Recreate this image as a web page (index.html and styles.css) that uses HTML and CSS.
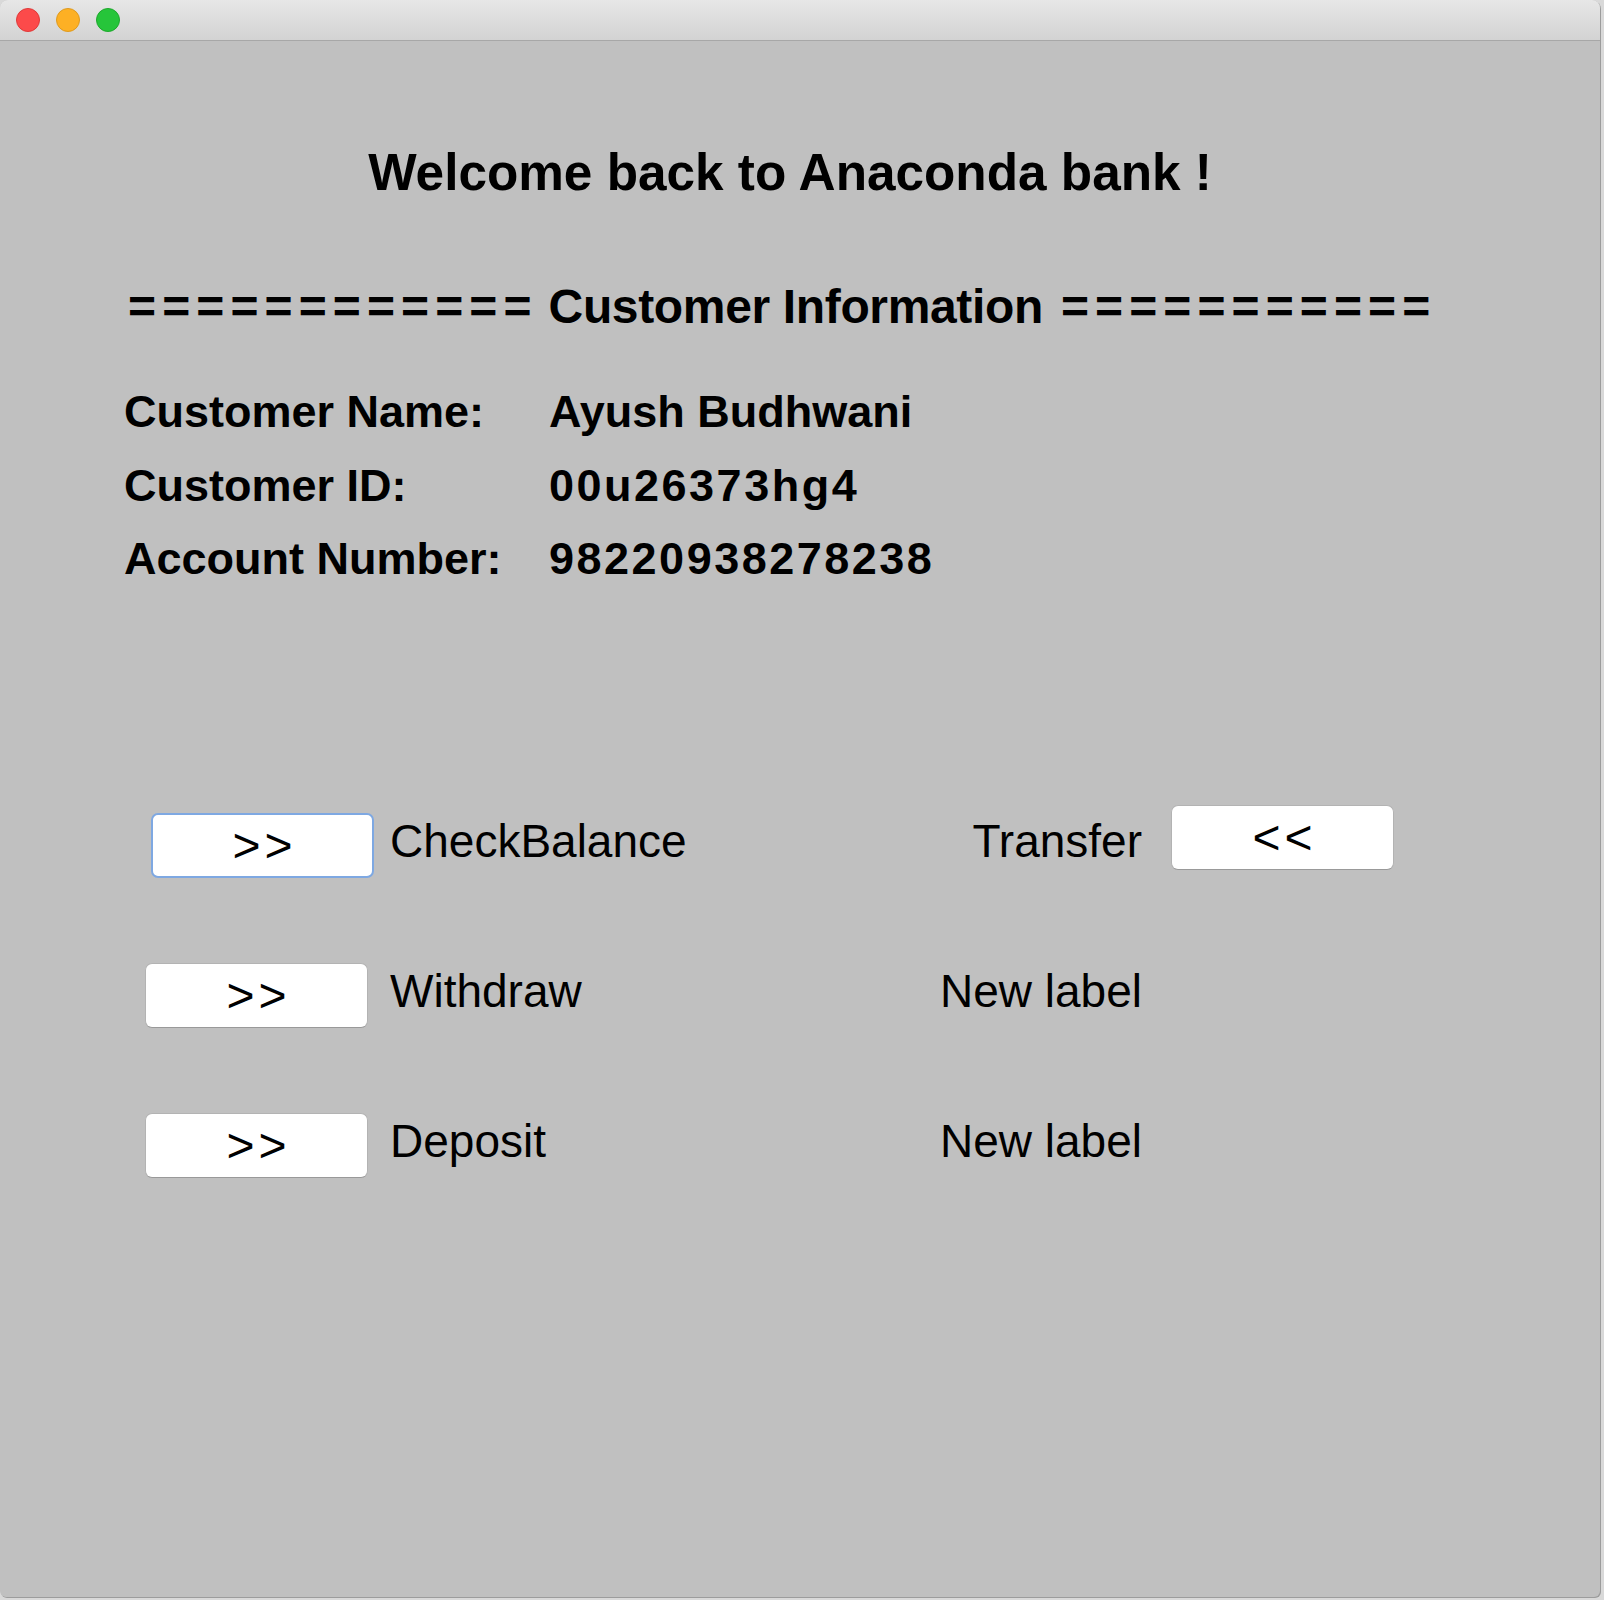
FILE: index.html
```
<!DOCTYPE html>
<html lang="en">
<head>
<meta charset="utf-8">
<title>Anaconda bank</title>
<link rel="stylesheet" href="styles.css">
</head>
<body>
<div class="window">
  <div class="titlebar">
    <span class="light red"></span>
    <span class="light yellow"></span>
    <span class="light green"></span>
  </div>
  <div class="content">
    <h1 class="title">Welcome back to Anaconda bank !</h1>
    <div class="section-head">
      <span class="rule">============</span>
      <span class="head-text">Customer Information</span>
      <span class="rule">===========</span>
    </div>
    <div class="info">
      <span class="info-label">Customer Name:</span>
      <span class="info-value">Ayush Budhwani</span>
      <span class="info-label">Customer ID:</span>
      <span class="info-value num">00u26373hg4</span>
      <span class="info-label">Account Number:</span>
      <span class="info-value num">98220938278238</span>
    </div>
    <div class="actions">
      <button class="btn btn-left focus">&gt;&gt;</button>
      <span class="label">CheckBalance</span>
      <span class="label label-right">Transfer</span>
      <button class="btn btn-right">&lt;&lt;</button>

      <button class="btn btn-left">&gt;&gt;</button>
      <span class="label">Withdraw</span>
      <span class="label label-right">New label</span>

      <button class="btn btn-left">&gt;&gt;</button>
      <span class="label">Deposit</span>
      <span class="label label-right">New label</span>
    </div>
  </div>
</div>
</body>
</html>
```
FILE: styles.css
```
html, body {
  margin: 0;
  padding: 0;
}

body {
  width: 1604px;
  height: 1600px;
  background: #d9d9d9;
  font-family: "Liberation Sans", Arial, sans-serif;
  color: #000;
  overflow: hidden;
}

.window {
  width: 1600px;
  height: 1597px;
  background: #c0c0c0;
  border-radius: 8px 8px 6px 6px;
  overflow: hidden;
  box-shadow: 1px 1px 0 #9c9c9c;
}

.titlebar {
  height: 40px;
  border-bottom: 1px solid #a7a7a7;
  background: linear-gradient(#e7e7e7, #d3d3d3);
  display: flex;
  align-items: center;
  gap: 16px;
  padding-left: 16px;
}

.light {
  width: 24px;
  height: 24px;
  border-radius: 50%;
  box-sizing: border-box;
}

.red {
  background: #fc4a4a;
  border: 1px solid #de3a39;
}

.yellow {
  background: #fdb024;
  border: 1px solid #de9a1f;
}

.green {
  background: #26c53a;
  border: 1px solid #1ea82c;
}

.content {
  padding-top: 102px;
}

.title {
  margin: 0;
  font-size: 51.3px;
  font-weight: bold;
  line-height: 60px;
  text-align: center;
  padding-right: 20px;
}

.section-head {
  display: flex;
  align-items: baseline;
  margin-top: 74px;
  padding-left: 128px;
  font-size: 48px;
  font-weight: bold;
  line-height: 60px;
  white-space: nowrap;
}

.rule {
  letter-spacing: 6.1px;
}

.head-text {
  margin-left: 11px;
  margin-right: 18px;
  letter-spacing: -0.35px;
}

.info {
  display: grid;
  grid-template-columns: 425px auto;
  margin-top: 38px;
  padding-left: 124px;
  font-size: 45px;
  font-weight: bold;
  line-height: 73.5px;
}

.num {
  letter-spacing: 2.5px;
}

.actions {
  display: grid;
  grid-template-columns: 223px 1fr auto 223px;
  grid-auto-rows: 65px;
  column-gap: 22px;
  row-gap: 85px;
  align-items: start;
  margin-top: 217px;
  padding: 0 206px 0 145px;
}

.btn {
  width: 223px;
  height: 65px;
  box-sizing: border-box;
  margin: 0;
  padding: 0 0 0 4px;
  background: #fff;
  border: 1px solid #b3b3b3;
  border-bottom-color: #999;
  border-radius: 7px;
  font-family: "Liberation Sans", Arial, sans-serif;
  font-size: 48px;
  color: #000;
  letter-spacing: 4px;
  display: flex;
  align-items: center;
  justify-content: center;
}

.btn-left {
  grid-column: 1;
}

.btn-right {
  grid-column: 4;
  margin-top: -8px;
}

.focus {
  border: 2px solid #7ea8e2;
  margin-left: 6px;
  margin-right: -6px;
}

.label {
  font-size: 46px;
  line-height: 56px;
  white-space: nowrap;
}

.label-right {
  text-align: right;
  margin-right: 7px;
}
```
